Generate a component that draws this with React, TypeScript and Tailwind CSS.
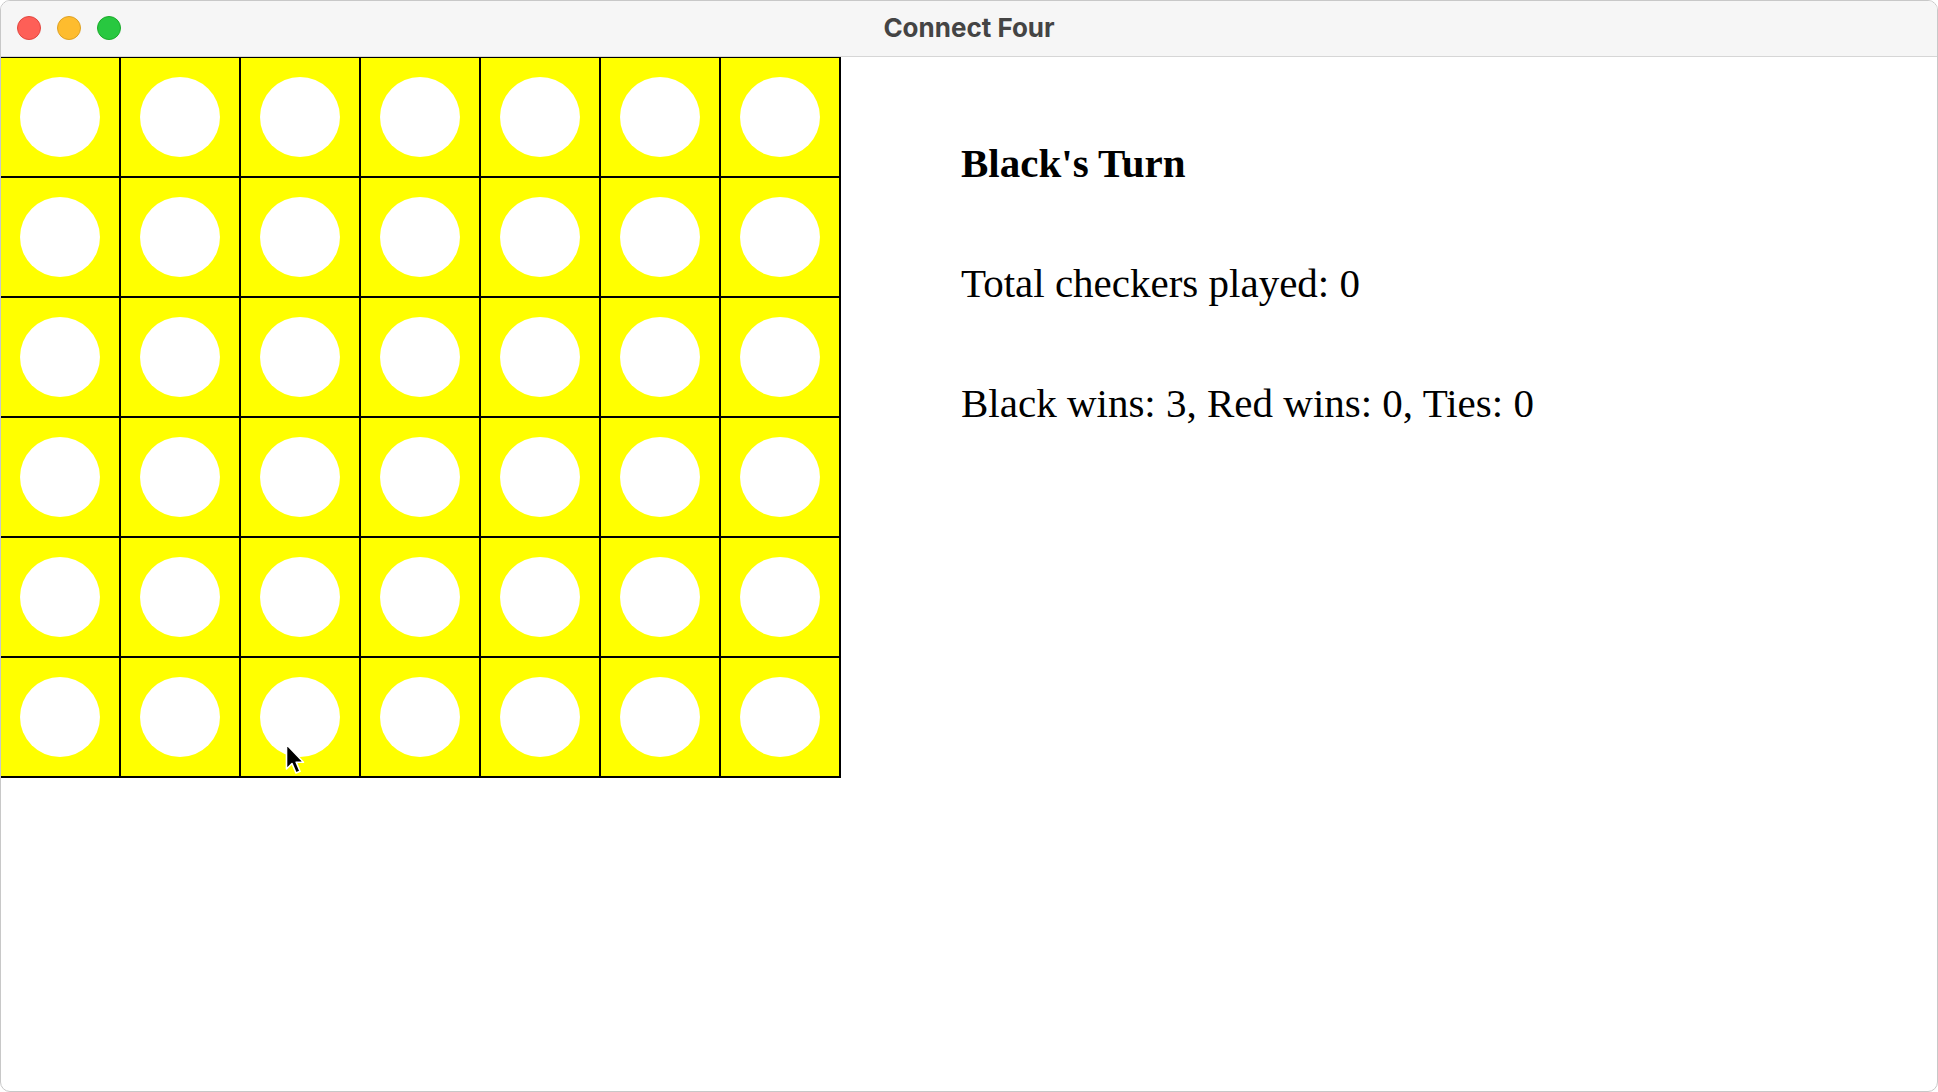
const ROWS = 6;
const COLS = 7;

function Cursor() {
  return (
    <svg
      className="absolute left-[285px] top-[686px] pointer-events-none"
      width="22"
      height="34"
      viewBox="0 0 22 34"
    >
      <path
        d="M1.5 1.5 L1.5 26 L7 20.5 L11 30 L15 28.3 L11.2 19.2 L18.5 19.2 Z"
        fill="#000"
        stroke="#fff"
        strokeWidth="1.6"
        strokeLinejoin="round"
      />
    </svg>
  );
}

function Board() {
  const cells = Array.from({ length: ROWS * COLS });
  return (
    <div className="relative shrink-0 border-r border-b border-black">
      <div className="grid grid-cols-[repeat(7,120px)]">
        {cells.map((_, i) => (
          <div
            key={i}
            className="w-[120px] h-[120px] bg-[#ffff00] border border-black flex items-center justify-center"
          >
            <div className="w-[80px] h-[80px] rounded-full bg-white" />
          </div>
        ))}
      </div>
      <Cursor />
    </div>
  );
}

export default function App() {
  return (
    <div className="w-[1938px] h-[1092px] bg-white">
      <div className="w-full h-full rounded-[10px] overflow-hidden border border-[#c8c8c8] bg-white flex flex-col">
        <div className="h-[56px] shrink-0 bg-[#f6f6f6] border-b border-[#d6d6d6] relative flex items-center justify-center">
          <div className="absolute left-[16px] top-[15px] flex gap-[16px]">
            <div className="w-[24px] h-[24px] rounded-full bg-[#fe5f57] border border-[#e2463f]" />
            <div className="w-[24px] h-[24px] rounded-full bg-[#febc2e] border border-[#dea123]" />
            <div className="w-[24px] h-[24px] rounded-full bg-[#28c840] border border-[#1aab29]" />
          </div>
          <span className="text-[26px] font-bold text-[#444] font-['Inter',sans-serif] -translate-y-[1px]">
            Connect Four
          </span>
        </div>
        <div className="flex -ml-px">
          <Board />
          <div className="pl-[120px] pt-[86px] flex flex-col gap-[79px] font-['Liberation_Serif',serif] text-black text-[41px] leading-[41px]">
            <div className="font-bold">Black's Turn</div>
            <div>Total checkers played: 0</div>
            <div>Black wins: 3, Red wins: 0, Ties: 0</div>
          </div>
        </div>
      </div>
    </div>
  );
}
